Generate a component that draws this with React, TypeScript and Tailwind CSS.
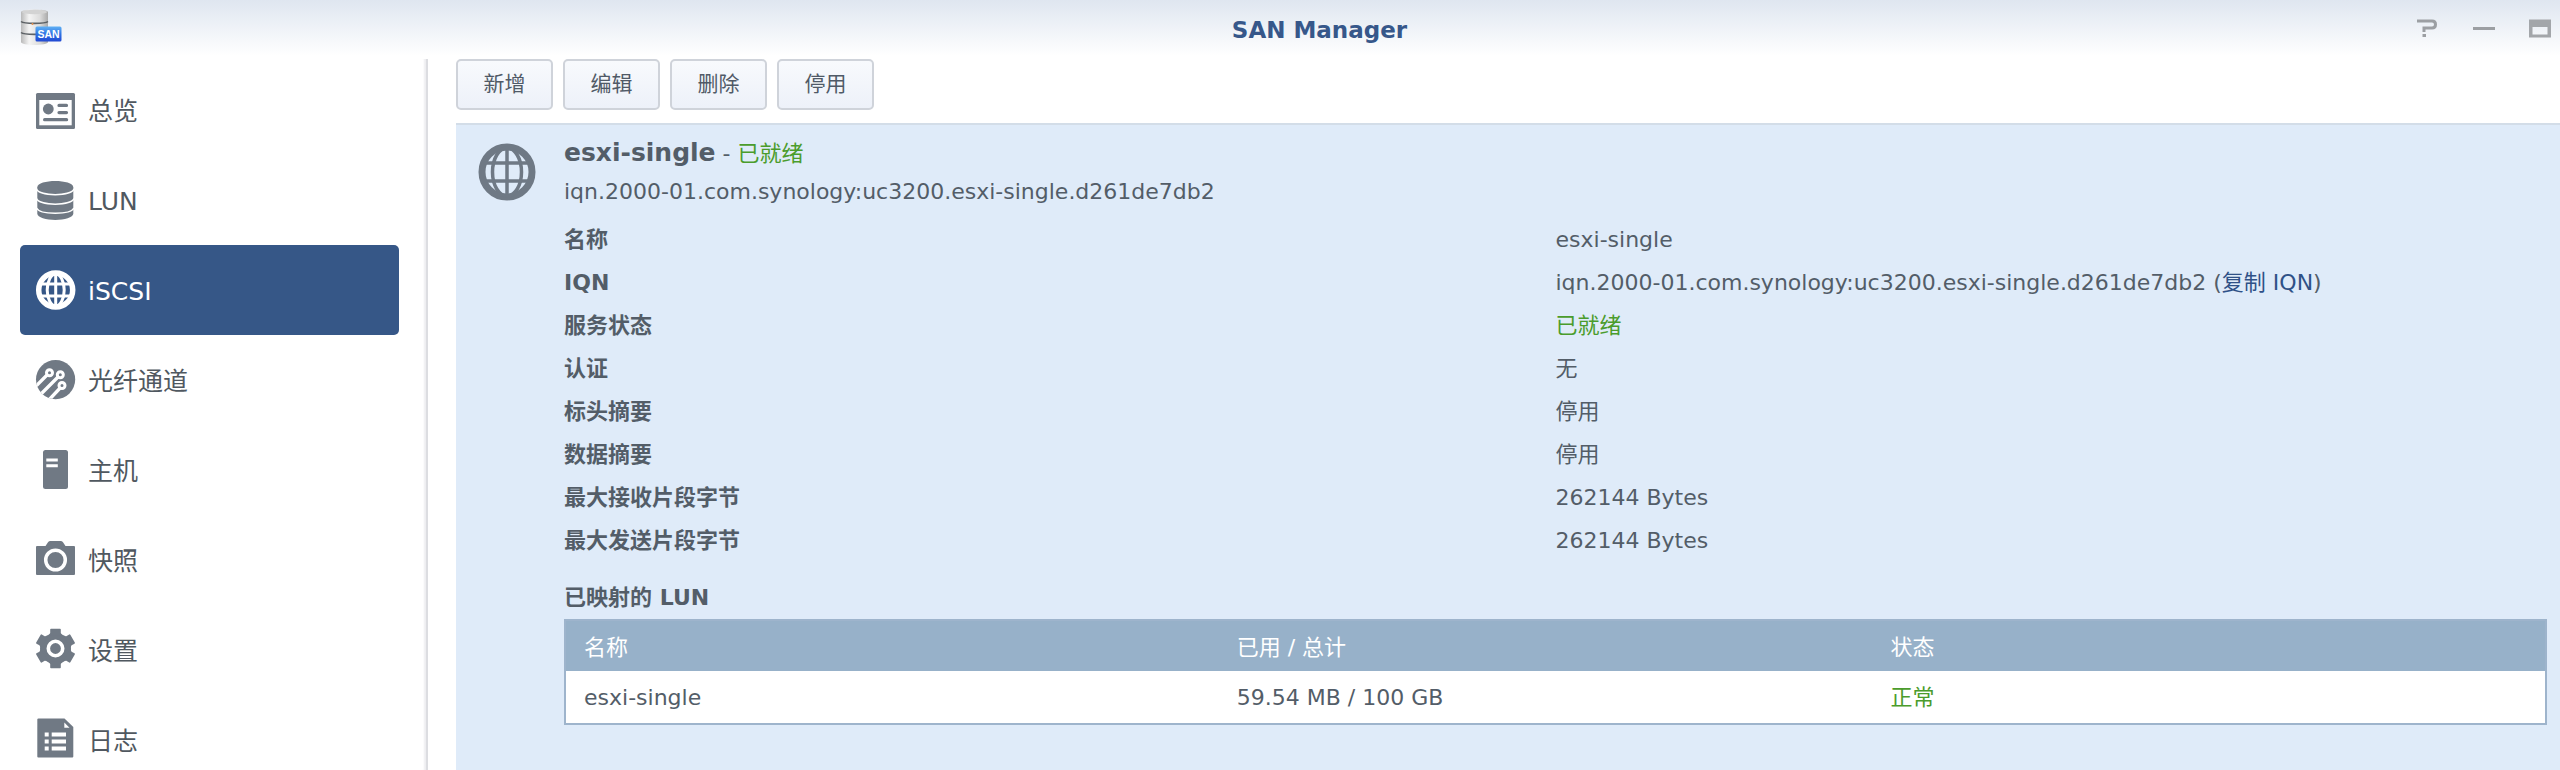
import type { ReactNode } from "react";

const GRAY = "#707984";

function Svg({ children }: { children: ReactNode }) {
  return (
    <svg viewBox="0 0 40 40" className="size-10 shrink-0 overflow-visible" aria-hidden="true">
      {children}
    </svg>
  );
}

function OverviewIcon() {
  return (
    <Svg>
      <rect x="0" y="3" width="39" height="36" rx="1.5" fill={GRAY} />
      <rect x="3.3" y="10" width="32.4" height="25.3" fill="#fff" />
      <circle cx="12.3" cy="19" r="5.4" fill={GRAY} />
      <path d="M23 15.4h7.5M23 22.6h7.5M8.6 29.7h22" stroke={GRAY} strokeWidth="3.2" strokeLinecap="round" />
    </Svg>
  );
}

function LunIcon() {
  return (
    <Svg>
      <path d="M1.3 7.3C1.3-1 37.3-1 37.3 7.3V33.6C37.3 42 1.3 42 1.3 33.6Z" fill={GRAY} />
      <path
        d="M.5 9C4 16.5 34.5 16.5 38 9M.5 18.5C4 26 34.5 26 38 18.5M.5 28C4 35 34.5 35 38 28"
        fill="none"
        stroke="#fff"
        strokeWidth="1.5"
      />
    </Svg>
  );
}

function NavGlobe() {
  return (
    <Svg>
      <g fill="none" stroke="#fff" strokeWidth="3">
        <circle cx="19.7" cy="20" r="17" strokeWidth="5.5" />
        <ellipse cx="19.7" cy="20" rx="8.5" ry="16" />
        <path d="M19.7 3v34M4 14h31.5M4 26h31.5" />
      </g>
    </Svg>
  );
}

function FibreIcon() {
  return (
    <Svg>
      <clipPath id="fibre-disc">
        <circle cx="19.6" cy="19.6" r="19.6" />
      </clipPath>
      <circle cx="19.6" cy="19.6" r="19.6" fill={GRAY} />
      <g clipPath="url(#fibre-disc)">
        <path d="M13 13 0 26M24 15 5 34M26 26 12 41" stroke="#fff" strokeWidth="3.3" />
        <g fill={GRAY} stroke="#fff" strokeWidth="3">
          <circle cx="13.5" cy="12.7" r="3" />
          <circle cx="24.3" cy="14.8" r="3" />
          <circle cx="26" cy="25.5" r="3" />
        </g>
      </g>
    </Svg>
  );
}

function HostIcon() {
  return (
    <Svg>
      <rect x="7" y="0" width="25" height="39" rx="2.5" fill={GRAY} />
      <path d="M10.3 10h11.5M10.3 15.8h11.5" stroke="#fff" strokeWidth="3" />
    </Svg>
  );
}

function SnapshotIcon() {
  return (
    <Svg>
      <path
        d="M1 6H9.5L12 2.2Q12.8 1 14.5 1H24.5Q26.200 1 27 2.2L29.5 6H38Q39 6 39 7V34Q39 35 38 35H1Q0 35 0 34V7Q0 6 1 6Z"
        fill={GRAY}
      />
      <circle cx="19.5" cy="20" r="9.8" fill="none" stroke="#fff" strokeWidth="3.5" />
    </Svg>
  );
}

function SettingsIcon() {
  return (
    <Svg>
      <g fill={GRAY}>
        <circle cx="19.5" cy="18.5" r="15.5" />
        {[0, 60, 120, 180, 240, 300].map((deg) => (
          <path
            key={deg}
            d="M14.2-.4Q14.2-1.2 15-1.2H24Q24.800-1.2 24.8-.4V3L26.5 5.500H12.500L14.2 3Z"
            transform={`rotate(${deg} 19.5 18.5)`}
          />
        ))}
      </g>
      <circle cx="19.5" cy="18.5" r="7.2" fill="none" stroke="#fff" strokeWidth="3.6" />
    </Svg>
  );
}

function LogIcon() {
  return (
    <Svg>
      <path d="M2.5-1.500H28.500L37.3 7V36.5Q37.3 37.5 36.3 37.5H2.3Q1.3 37.5 1.3 36.5V-.3Q1.3-1.5 2.5-1.5Z" fill={GRAY} />
      <path d="M28.3 2.5V7.8H33.5Z" fill="#fff" />
      <path d="M8.7 14.500h4M15.7 14.500H30M8.7 21.5h4M15.7 21.5H30M8.7 28.5h4M15.7 28.5H30" stroke="#fff" strokeWidth="3.8" />
    </Svg>
  );
}

function PanelGlobe() {
  return (
    <svg viewBox="0 0 58 58" className="size-[58px] shrink-0" aria-hidden="true">
      <g fill="none" stroke="#6f7985" strokeWidth="3.5">
        <circle cx="29" cy="29" r="25" strokeWidth="7" />
        <ellipse cx="29" cy="29" rx="14.5" ry="24" />
        <path d="M29 4v50M6 20h46M6 38h46" />
      </g>
    </svg>
  );
}

function Logo() {
  return (
    <svg viewBox="0 0 42 37" className="h-[37px] w-[42px] shrink-0" role="img" aria-label="SAN">
      <defs>
        <linearGradient id="disk-body">
          <stop offset="0" stopColor="#b9b9b9" />
          <stop offset=".3" stopColor="#f4f4f4" />
          <stop offset=".7" stopColor="#dcdcdc" />
          <stop offset="1" stopColor="#a9a9a9" />
        </linearGradient>
        <linearGradient id="san-badge" x2="0" y2="1">
          <stop offset="0" stopColor="#5fb0f4" />
          <stop offset=".5" stopColor="#2f74e4" />
          <stop offset="1" stopColor="#2148d2" />
        </linearGradient>
      </defs>
      <path d="M1 3C1-.5 28-.5 28 3V33C28 37 1 37 1 33Z" fill="url(#disk-body)" />
      <ellipse cx="14.5" cy="3" rx="12.5" ry="2.2" fill="#d3d3d3" />
      <path d="M1 12.500C4 15 25 15 28 12.500M1 23.500C4 26 25 26 28 23.500" fill="none" stroke="#5d6266" strokeWidth="1.6" />
      <circle cx="12.5" cy="15" r="1" fill="#e8914a" />
      <rect x="15.500" y="17.500" width="26" height="15" rx="1.5" fill="url(#san-badge)" />
      <text x="28.500" y="28.500" textAnchor="middle" fontFamily="Liberation Sans" fontWeight="bold" fontSize="10.5" fill="#fff">
        SAN
      </text>
    </svg>
  );
}

const navItems = [
  { label: "总览", icon: <OverviewIcon /> },
  { label: "LUN", icon: <LunIcon /> },
  { label: "iSCSI", icon: <NavGlobe />, active: true },
  { label: "光纤通道", icon: <FibreIcon /> },
  { label: "主机", icon: <HostIcon /> },
  { label: "快照", icon: <SnapshotIcon /> },
  { label: "设置", icon: <SettingsIcon /> },
  { label: "日志", icon: <LogIcon /> },
];

const IQN = "iqn.2000-01.com.synology:uc3200.esxi-single.d261de7db2";

const details: { label: string; value: ReactNode }[] = [
  { label: "名称", value: "esxi-single" },
  {
    label: "IQN",
    value: (
      <>
        {IQN} (<a href="#copy" className="text-[#2f5187]">复制 IQN</a>)
      </>
    ),
  },
  { label: "服务状态", value: <span className="text-[#4b9c2c]">已就绪</span> },
  { label: "认证", value: "无" },
  { label: "标头摘要", value: "停用" },
  { label: "数据摘要", value: "停用" },
  { label: "最大接收片段字节", value: "262144 Bytes" },
  { label: "最大发送片段字节", value: "262144 Bytes" },
];

export default function App() {
  return (
    <div className="flex h-screen flex-col overflow-hidden bg-white bg-linear-to-b from-[#dfe6f0] to-white bg-[length:100%_56px] bg-no-repeat font-['Verdana','DejaVu_Sans','Noto_Sans_CJK_SC',sans-serif] text-[22px] text-[#535d68]">
      <header className="flex h-[59px] shrink-0 items-start pr-[9px] pl-5">
        <div className="pt-[9px]">
          <Logo />
        </div>
        <h1 className="flex-1 pt-3 pl-40 text-center text-[23px] leading-9 font-bold text-[#36578a]">SAN Manager</h1>
        <div className="flex gap-[34px] pt-[18px]">
          <button type="button" aria-label="帮助">
            <svg viewBox="0 0 22 20" className="h-5 w-[22px]" fill="none" stroke="#9c9fa3" strokeWidth="3">
              <path d="M0 3H15Q18.5 3 18.5 6.5T15 10H7V14M5.5 17.5H9" />
            </svg>
          </button>
          <button type="button" aria-label="最小化">
            <svg viewBox="0 0 22 20" className="h-5 w-[22px]">
              <path d="M0 10.5H22" stroke="#9c9fa3" strokeWidth="3" />
            </svg>
          </button>
          <button type="button" aria-label="最大化">
            <svg viewBox="0 0 22 20" className="h-5 w-[22px]">
              <path fillRule="evenodd" d="M0 1.5H22V19.5H0ZM3.5 9V16.5H18.5V9Z" fill="#a3a6aa" />
            </svg>
          </button>
        </div>
      </header>

      <div className="flex min-h-0 flex-1">
        <nav className="w-[428px] shrink-0 border-r-2 border-[#dcdde1] pt-[6px] pr-[27px] pl-5 shadow-[inset_-3px_0_2px_-1px_#eeeef1]">
          {navItems.map(({ label, icon, active }) => (
            <a
              key={label}
              href="#nav"
              aria-current={active ? "page" : undefined}
              className={
                active
                  ? "flex h-[90px] items-center gap-3 rounded-[5px] bg-[#365787] px-4 text-[25px] text-white"
                  : "flex h-[90px] items-center gap-3 px-4 text-[25px] text-[#505860]"
              }
            >
              {icon}
              <span className="pt-1">{label}</span>
            </a>
          ))}
        </nav>

        <main className="flex min-w-0 flex-1 flex-col pl-7">
          <div className="flex gap-[10px]">
            {["新增", "编辑", "删除", "停用"].map((label) => (
              <button
                key={label}
                type="button"
                className="h-[51px] w-[97px] rounded-[5px] border-2 border-[#cfd3da] bg-linear-to-b from-[#f8fafd] to-[#edf1f9] text-[21px] text-[#505a67]"
              >
                {label}
              </button>
            ))}
          </div>

          <section className="mt-[13px] flex flex-1 gap-7 border-t-2 border-[#d3dde8] bg-[#dfebf9] pt-[18px] pr-[13px] pl-[22px]">
            <PanelGlobe />
            <div className="min-w-0 flex-1">
              <h2 className="leading-5">
                <span className="text-[25px] font-bold">esxi-single</span> -{" "}
                <span className="text-[#4b9c2c]">已就绪</span>
              </h2>
              <p className="mt-3 leading-8">{IQN}</p>
              <dl className="mt-[10px]">
                {details.map(({ label, value }) => (
                  <div key={label} className="grid grid-cols-2 leading-[43px]">
                    <dt className="font-bold">{label}</dt>
                    <dd>{value}</dd>
                  </div>
                ))}
              </dl>
              <h3 className="mt-[14px] leading-[43px] font-bold">已映射的 LUN</h3>
              <table className="w-full table-fixed border-collapse border-2 border-[#9eb4cc] bg-white text-left">
                <thead className="bg-[#97b1c9] text-white">
                  <tr className="h-[51px]">
                    <th className="w-[33%] pt-[2px] pl-[18px] font-normal">名称</th>
                    <th className="w-[33%] pt-[2px] pl-[18px] font-normal">已用 / 总计</th>
                    <th className="w-[34%] pt-[2px] pl-[18px] font-normal">状态</th>
                  </tr>
                </thead>
                <tbody>
                  <tr className="h-[53px]">
                    <td className="pl-[18px]">esxi-single</td>
                    <td className="pl-[18px]">59.54 MB / 100 GB</td>
                    <td className="pl-[18px] text-[#4b9c2c]">正常</td>
                  </tr>
                </tbody>
              </table>
            </div>
          </section>
        </main>
      </div>
    </div>
  );
}
